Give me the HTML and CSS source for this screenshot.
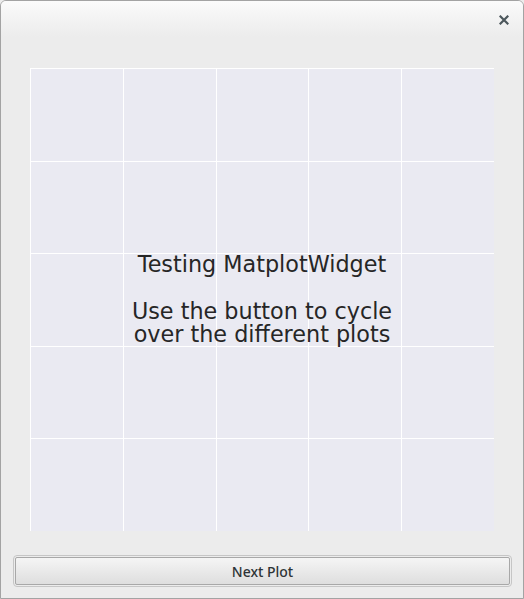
FILE: index.html
```html
<!DOCTYPE html>
<html>
<head>
<meta charset="utf-8">
<link rel="stylesheet" href="styles.css">
</head>
<body>
<div class="window">
  <div class="titlebar">
    <svg class="close" width="10" height="10" viewBox="0 0 10 10">
      <path d="M1.5 1.5 L8.5 8.5 M8.5 1.5 L1.5 8.5" stroke="#4c575c" stroke-width="2.2" stroke-linecap="square"/>
    </svg>
  </div>
  <div class="content">
    <div class="plot">
      <div class="grid">
        <div class="cell"></div><div class="cell"></div><div class="cell"></div><div class="cell"></div><div class="cell"></div>
        <div class="cell"></div><div class="cell"></div><div class="cell"></div><div class="cell"></div><div class="cell"></div>
        <div class="cell"></div><div class="cell"></div><div class="cell"></div><div class="cell"></div><div class="cell"></div>
        <div class="cell"></div><div class="cell"></div><div class="cell"></div><div class="cell"></div><div class="cell"></div>
        <div class="cell"></div><div class="cell"></div><div class="cell"></div><div class="cell"></div><div class="cell"></div>
      </div>
      <div class="message">Testing MatplotWidget<br><br>Use the button to cycle<br>over the different plots</div>
    </div>
  </div>
  <div class="footer">
    <div class="btn-ring"><div class="btn">Next Plot</div></div>
  </div>
</div>
</body>
</html>
```
FILE: styles.css
```css
html, body {
  margin: 0;
  padding: 0;
  background: #ececec;
}
.window {
  box-sizing: border-box;
  width: 524px;
  height: 599px;
  border: 1px solid #a3a3a3;
  border-radius: 6px 6px 0 0;
  background: #ececec;
  display: flex;
  flex-direction: column;
  overflow: hidden;
}
.titlebar {
  height: 40px;
  background: linear-gradient(#fbfbfb 0px, #f3f3f3 18px, #ececec 36px);
  display: flex;
  justify-content: flex-end;
  align-items: flex-start;
}
.close {
  margin-top: 14px;
  margin-right: 14px;
}
.content {
  padding: 27px 0 0 29px;
}
.plot {
  position: relative;
  width: 464px;
  height: 463px;
  background: #eaeaf2;
}
.grid {
  display: grid;
  grid-template-columns: repeat(5, 1fr);
  grid-template-rows: repeat(5, 1fr);
  width: 100%;
  height: 100%;
}
.cell {
  border-left: 1px solid #ffffff;
  border-top: 1px solid #ffffff;
}
.message {
  position: absolute;
  inset: 0;
  display: flex;
  align-items: center;
  justify-content: center;
  text-align: center;
  font-family: "DejaVu Sans", sans-serif;
  font-size: 22.3px;
  line-height: 23.5px;
  color: #262626;
}
.footer {
  padding: 24px 0 0 12px;
}
.btn-ring {
  width: 495px;
  height: 28px;
  border: 1px solid #c6c6c6;
  border-radius: 4px;
  padding: 1px;
  box-sizing: content-box;
}
.btn {
  box-sizing: border-box;
  height: 28px;
  border: 1px solid #a8a8a8;
  border-radius: 2px;
  background: linear-gradient(#f5f5f5, #dedede);
  display: flex;
  align-items: center;
  justify-content: center;
  font-family: "Noto Sans", "DejaVu Sans", sans-serif;
  font-size: 14px;
  font-weight: 500;
  color: #2e3436;
}
```
